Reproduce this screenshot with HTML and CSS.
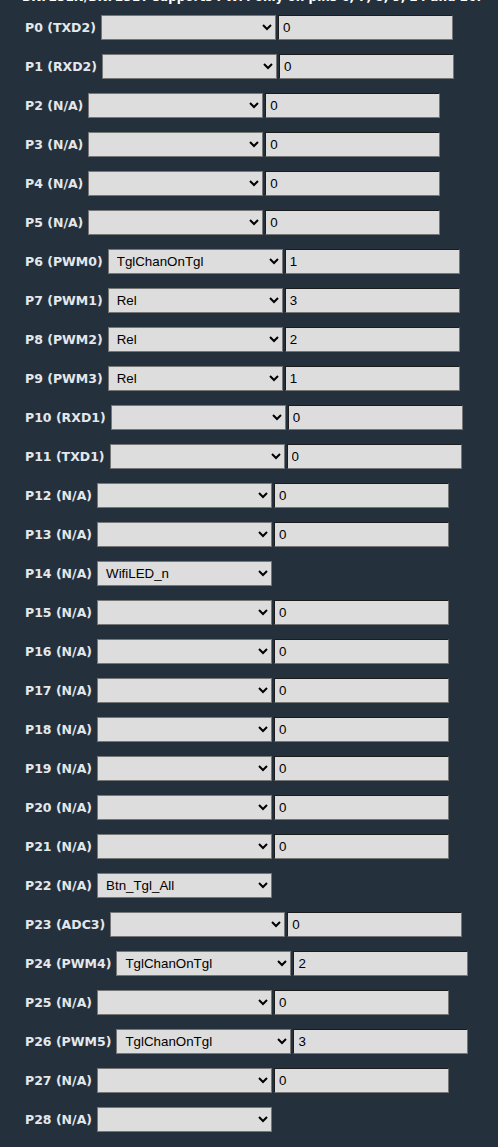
FILE: index.html
```html
<!DOCTYPE html>
<html lang="en">
<head>
  <meta charset="UTF-8" />
  <meta name="viewport" content="width=device-width, initial-scale=1" />
  <title>Configure Module</title>
  <link rel="stylesheet" href="styles.css">
</head>
<body>
  <div class="page">
    <p class="note">BK7231N/BK7231T supports PWM only on pins 6, 7, 8, 9, 24 and 26.</p>

    <div class="pin-row"><span class="pin-label">P0 (TXD2)</span><select><option></option></select><input type="text" value="0"></div>
    <div class="pin-row"><span class="pin-label">P1 (RXD2)</span><select><option></option></select><input type="text" value="0"></div>
    <div class="pin-row"><span class="pin-label">P2 (N/A)</span><select><option></option></select><input type="text" value="0"></div>
    <div class="pin-row"><span class="pin-label">P3 (N/A)</span><select><option></option></select><input type="text" value="0"></div>
    <div class="pin-row"><span class="pin-label">P4 (N/A)</span><select><option></option></select><input type="text" value="0"></div>
    <div class="pin-row"><span class="pin-label">P5 (N/A)</span><select><option></option></select><input type="text" value="0"></div>
    <div class="pin-row"><span class="pin-label">P6 (PWM0)</span><select><option>TglChanOnTgl</option></select><input type="text" value="1"></div>
    <div class="pin-row"><span class="pin-label">P7 (PWM1)</span><select><option>Rel</option></select><input type="text" value="3"></div>
    <div class="pin-row"><span class="pin-label">P8 (PWM2)</span><select><option>Rel</option></select><input type="text" value="2"></div>
    <div class="pin-row"><span class="pin-label">P9 (PWM3)</span><select><option>Rel</option></select><input type="text" value="1"></div>
    <div class="pin-row"><span class="pin-label">P10 (RXD1)</span><select><option></option></select><input type="text" value="0"></div>
    <div class="pin-row"><span class="pin-label">P11 (TXD1)</span><select><option></option></select><input type="text" value="0"></div>
    <div class="pin-row"><span class="pin-label">P12 (N/A)</span><select><option></option></select><input type="text" value="0"></div>
    <div class="pin-row"><span class="pin-label">P13 (N/A)</span><select><option></option></select><input type="text" value="0"></div>
    <div class="pin-row"><span class="pin-label">P14 (N/A)</span><select><option>WifiLED_n</option></select></div>
    <div class="pin-row"><span class="pin-label">P15 (N/A)</span><select><option></option></select><input type="text" value="0"></div>
    <div class="pin-row"><span class="pin-label">P16 (N/A)</span><select><option></option></select><input type="text" value="0"></div>
    <div class="pin-row"><span class="pin-label">P17 (N/A)</span><select><option></option></select><input type="text" value="0"></div>
    <div class="pin-row"><span class="pin-label">P18 (N/A)</span><select><option></option></select><input type="text" value="0"></div>
    <div class="pin-row"><span class="pin-label">P19 (N/A)</span><select><option></option></select><input type="text" value="0"></div>
    <div class="pin-row"><span class="pin-label">P20 (N/A)</span><select><option></option></select><input type="text" value="0"></div>
    <div class="pin-row"><span class="pin-label">P21 (N/A)</span><select><option></option></select><input type="text" value="0"></div>
    <div class="pin-row"><span class="pin-label">P22 (N/A)</span><select><option>Btn_Tgl_All</option></select></div>
    <div class="pin-row"><span class="pin-label">P23 (ADC3)</span><select><option></option></select><input type="text" value="0"></div>
    <div class="pin-row"><span class="pin-label">P24 (PWM4)</span><select><option>TglChanOnTgl</option></select><input type="text" value="2"></div>
    <div class="pin-row"><span class="pin-label">P25 (N/A)</span><select><option></option></select><input type="text" value="0"></div>
    <div class="pin-row"><span class="pin-label">P26 (PWM5)</span><select><option>TglChanOnTgl</option></select><input type="text" value="3"></div>
    <div class="pin-row"><span class="pin-label">P27 (N/A)</span><select><option></option></select><input type="text" value="0"></div>
    <div class="pin-row"><span class="pin-label">P28 (N/A)</span><select><option></option></select></div>
  </div>
</body>
</html>
```

FILE: styles.css
```css
:root {
  --fundo: #24313d;
  --texto: #e4e8ec;
  --campo: #dddddd;
  --borda: #767676;
}

body {
  margin: 0;
  background: var(--fundo);
  font-family: "DejaVu Sans", Verdana, sans-serif;
  color: var(--texto);
}

.page {
  padding: 0 0 20px 21px;
}

.note {
  margin: -11px 0 10px 1px;
  font-size: 12px;
  line-height: 16px;
  font-weight: bold;
  color: #ffffff;
  white-space: nowrap;
}

.pin-row {
  display: flex;
  align-items: center;
  height: 24px;
  margin: 0 0 15px 4px;
}

.pin-label {
  font-size: 12.5px;
  font-weight: bold;
  margin-right: 5px;
}

select,
input {
  box-sizing: border-box;
  width: 175px;
  height: 25px;
  background: var(--campo);
  color: #000;
  font-family: "Liberation Sans", Arial, sans-serif;
  font-size: 13.33px;
  border-radius: 0;
}

select {
  border: 1px solid var(--borda);
  padding: 0 4px;
  margin-right: 2px;
}

input {
  border: 1px solid;
  border-color: #1c1c1c var(--borda) var(--borda) #1c1c1c;
  padding: 0 4px;
}
```
